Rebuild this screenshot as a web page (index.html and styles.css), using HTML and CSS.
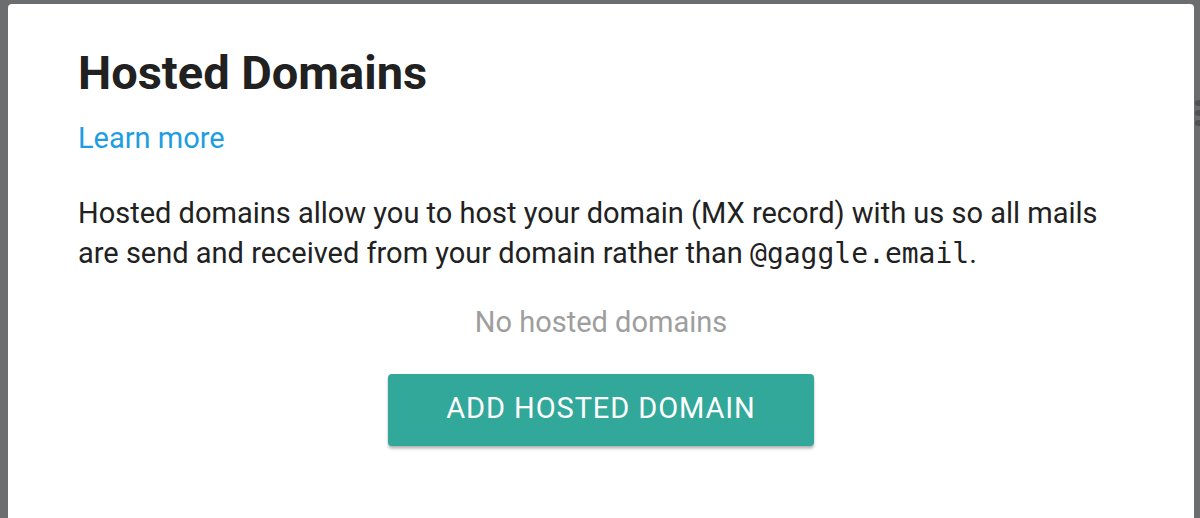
FILE: index.html
```html
<!DOCTYPE html>
<html>
<head>
<meta charset="utf-8">
<link rel="stylesheet" href="styles.css">
</head>
<body>
<div class="backdrop">
  <div class="dialog">
    <h1 class="title">Hosted Domains</h1>
    <a class="learn" href="#">Learn more</a>
    <p class="desc">Hosted domains allow you to host your domain (MX record) with us so all mails are send and received from your domain rather than <code>@gaggle.email</code>.</p>
    <div class="empty">No hosted domains</div>
    <div class="actions">
      <button class="add-btn">ADD HOSTED DOMAIN</button>
    </div>
  </div>
  <div class="behind-dots"><span></span><span></span><span></span></div>
</div>
</body>
</html>
```
FILE: styles.css
```css
html, body {
  margin: 0;
  padding: 0;
  height: 100%;
  overflow: hidden;
}
body {
  background: #6c6d6e;
  font-family: Roboto, "Noto Sans", sans-serif;
}
.backdrop {
  position: relative;
  height: 100%;
  padding: 4px 6px 0 8px;
  box-sizing: border-box;
}
.dialog {
  background: #ffffff;
  border-radius: 4px 4px 0 0;
  height: 600px;
  padding: 41px 70px 0 70px;
  box-sizing: border-box;
}
.title {
  margin: 0;
  font-size: 47px;
  line-height: 56px;
  font-weight: 700;
  color: #212121;
}
.learn {
  display: block;
  margin-top: 17px;
  font-size: 29px;
  line-height: 40px;
  color: #1e9de3;
  text-decoration: none;
}
.desc {
  margin: 35px 0 0 0;
  font-size: 29px;
  line-height: 40px;
  color: #212121;
}
.desc code {
  font-family: "DejaVu Sans Mono", "Liberation Mono", monospace;
  font-size: 28px;
}
.empty {
  margin-top: 28px;
  text-align: center;
  font-size: 29px;
  line-height: 40px;
  color: #9e9e9e;
}
.actions {
  display: flex;
  justify-content: center;
  margin-top: 32px;
}
.add-btn {
  width: 426px;
  height: 72px;
  padding: 0 0 4px 0;
  border: none;
  border-radius: 4px;
  background: #31a899;
  color: #ffffff;
  font-family: Roboto, sans-serif;
  font-size: 29px;
  font-weight: 400;
  letter-spacing: 0.9px;
  box-shadow: 0 3px 3px rgba(0,0,0,0.22), 0 1px 2px rgba(0,0,0,0.12);
}
.behind-dots {
  position: absolute;
  right: 0;
  top: 100px;
  display: flex;
  flex-direction: column;
  gap: 4px;
}
.behind-dots span {
  display: block;
  width: 5px;
  height: 6px;
  border-radius: 3px 0 0 3px;
  background: #505152;
}
```
